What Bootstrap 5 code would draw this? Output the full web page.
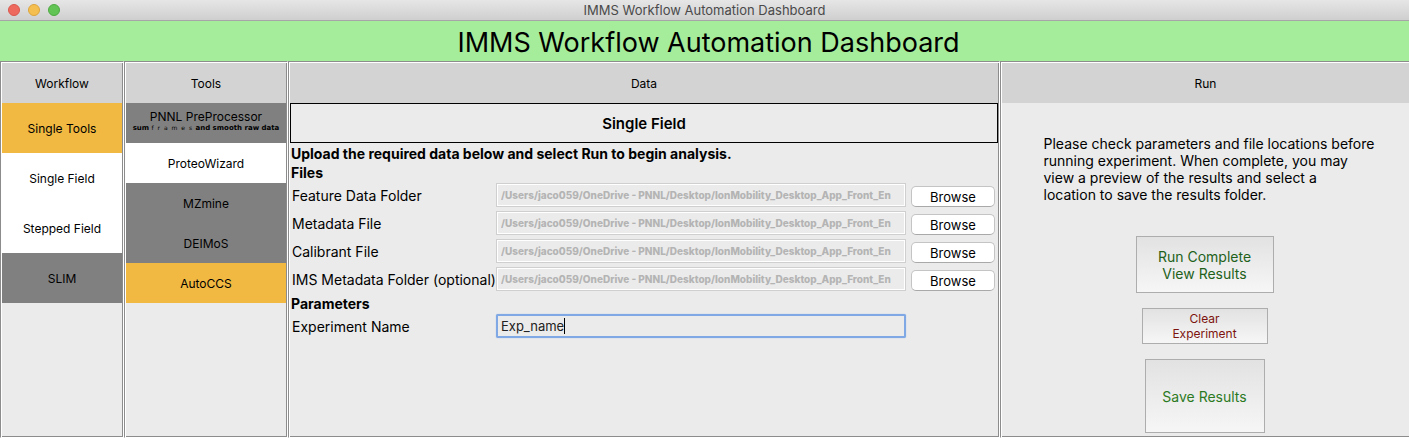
<!DOCTYPE html>
<html lang="en">
<head>
<meta charset="utf-8">
<meta name="viewport" content="width=device-width, initial-scale=1">
<title>IMMS Workflow Automation Dashboard</title>
<link href="https://cdn.jsdelivr.net/npm/bootstrap@5.3.0/dist/css/bootstrap.min.css" rel="stylesheet">
<style>
  body { font-family: Inter, "Liberation Sans", sans-serif; font-size: 12px; line-height: 16px; color: #000; background: #ebebeb; }
  .titlebar { height: 21px; border-bottom: 1px solid #a8a5a8; background: linear-gradient(#e6e6e6, #cfcfcf); color: #4a4a4a; display: grid; grid-template-columns: 1fr auto 1fr; font-size: 13px; }
  .light { width: 12px; height: 12px; border-radius: 50%; border: 1px solid; }
  .light-close { background: #ee6a5f; border-color: #d9584e; }
  .light-min { background: #f5bf4f; border-color: #dca43c; }
  .light-max { background: #61c454; border-color: #4eaa42; }
  .banner { background: #a6ed9b; height: 40px; padding-top: 2px; }
  .banner h1 { font-size: 27px; line-height: 40px; font-weight: 400; padding-left: 8px; }
  /* grooved frame: dark outer and light inner edge */
  .pane { border: 1px solid #fff; border-top-color: #8c8c8c; border-left-color: #8c8c8c; box-shadow: inset 1px 1px #fff, inset -1px -1px #8c8c8c; padding: 1px; }
  .pane-workflow { flex: 0 0 124px; }
  .pane-tools { flex: 0 0 164px; }
  .pane-data { flex: 708 1 0; min-width: 0; }
  .pane-run { flex: 407 1 0; min-width: 0; margin-right: -2px; }
  .pane-head { background: #d3d3d3; height: 40px; font-size: 12px; line-height: 16px; font-weight: 400; padding-top: 2px; }
  .step { border: 0; width: 100%; padding: 2px 0 0; height: 40px; background: #808080; color: #000; }
  .step-tall { height: 50px; }
  .step-on { background: #f1b941; }
  .step-open { background: #fff; }
  .step-noted { padding: 0 0 4px; line-height: 14px; }
  .note { font: bold 7px/8px "DejaVu Sans", sans-serif; white-space: pre; }
  .note span { font: 6px/8px "DejaVu Sans", sans-serif; letter-spacing: 1px; }
  .method { border: 1px solid #000; height: 40px; font-size: 15px; font-weight: 600; padding-top: 2px; }
  .section-line { font-size: 14px; line-height: 19px; font-weight: 700; padding-left: 1px; }
  .lead-line { padding-top: 1px; }
  .field { display: grid; grid-template-columns: 199px minmax(0, 1fr) 84px; column-gap: 5px; height: 28px; padding: 1px 3px 0 2px; font-size: 14px; }
  .field label { padding-top: 5px; white-space: nowrap; }
  .path { height: 24px; border: 1px solid #cfcfcf; box-shadow: inset 0 0 0 1px #fff; border-radius: 0; background: #ebebeb; padding: 0 4px; font-size: 10px; font-weight: 800; color: #b4b4b4; width: 100%; min-width: 0; }
  .browse { height: 21px; margin-top: 3px; border: 1px solid #c4c4c4; border-bottom-color: #a9a9a9; border-radius: 5px; background: #fff; font-size: 13px; line-height: 18px; padding: 0; color: #000; }
  .name-box { height: 24px; width: 100%; border: 2px solid #7fa8e4; border-radius: 2px; outline: 0; background: #ebebeb; padding: 0 3px; font-size: 13px; color: #222; box-shadow: 0 0 1px #7fa8e4; }
  .caret { left: 68px; top: 4px; width: 1px; height: 16px; background: #000; }
  .advice { font-size: 14px; line-height: 17px; width: 344px; padding: 32px 0 0 10px; }
  .act { border: 1px solid #adadad; background: linear-gradient(#e2e2e2, #f6f6f6); font-size: 14px; line-height: 17px; padding: 0; }
  .act-run { width: 138px; height: 57px; color: #22611a; }
  .act-clear { width: 126px; height: 36px; color: #7d130e; font-size: 12px; line-height: 15px; }
  .act-save { width: 120px; height: 74px; color: #2c7a1f; }
  .act-list { gap: 15px; padding: 33px 2px 0 0; }
</style>
</head>
<body class="d-flex flex-column min-vh-100">
<header>
  <div class="titlebar align-items-center">
    <div class="d-flex gap-2 ps-2"><span class="light light-close"></span><span class="light light-min"></span><span class="light light-max"></span></div>
    <div>IMMS Workflow Automation Dashboard</div>
  </div>
  <div class="banner text-center"><h1 class="m-0">IMMS Workflow Automation Dashboard</h1></div>
</header>
<main class="d-flex flex-grow-1 overflow-hidden">
  <nav class="pane pane-workflow" aria-label="Workflow">
    <h2 class="pane-head d-flex align-items-center justify-content-center m-0">Workflow</h2>
    <button type="button" class="step step-tall step-on d-block">Single Tools</button>
    <button type="button" class="step step-tall step-open d-block">Single Field</button>
    <button type="button" class="step step-tall step-open d-block">Stepped Field</button>
    <button type="button" class="step step-tall d-block">SLIM</button>
  </nav>
  <nav class="pane pane-tools" aria-label="Tools">
    <h2 class="pane-head d-flex align-items-center justify-content-center m-0">Tools</h2>
    <button type="button" class="step step-noted d-block">PNNL PreProcessor<div class="note">sum <span>f r a m e s</span> and smooth raw data</div></button>
    <button type="button" class="step step-open d-block">ProteoWizard</button>
    <button type="button" class="step d-block">MZmine</button>
    <button type="button" class="step d-block">DEIMoS</button>
    <button type="button" class="step step-on d-block">AutoCCS</button>
  </nav>
  <section class="pane pane-data">
    <h2 class="pane-head d-flex align-items-center justify-content-center m-0">Data</h2>
    <h3 class="method d-flex align-items-center justify-content-center m-0">Single Field</h3>
    <div class="section-line lead-line">Upload the required data below and select Run to begin analysis.</div>
    <div class="section-line">Files</div>
    <div class="field"><label for="feature">Feature Data Folder</label><input id="feature" class="path" disabled value="/Users/jaco059/OneDrive - PNNL/Desktop/IonMobility_Desktop_App_Front_En"><button type="button" class="browse">Browse</button></div>
    <div class="field"><label for="metadata">Metadata File</label><input id="metadata" class="path" disabled value="/Users/jaco059/OneDrive - PNNL/Desktop/IonMobility_Desktop_App_Front_En"><button type="button" class="browse">Browse</button></div>
    <div class="field"><label for="calibrant">Calibrant File</label><input id="calibrant" class="path" disabled value="/Users/jaco059/OneDrive - PNNL/Desktop/IonMobility_Desktop_App_Front_En"><button type="button" class="browse">Browse</button></div>
    <div class="field"><label for="ims">IMS Metadata Folder (optional)</label><input id="ims" class="path" disabled value="/Users/jaco059/OneDrive - PNNL/Desktop/IonMobility_Desktop_App_Front_En"><button type="button" class="browse">Browse</button></div>
    <div class="section-line">Parameters</div>
    <div class="field"><label for="expname">Experiment Name</label><div class="position-relative"><input id="expname" class="name-box" type="text" value="Exp_name"><span class="caret position-absolute"></span></div></div>
  </section>
  <section class="pane pane-run">
    <h2 class="pane-head d-flex align-items-center justify-content-center m-0">Run</h2>
    <div class="d-flex flex-column align-items-center">
      <p class="advice m-0">Please check parameters and file locations before running experiment. When complete, you may view a preview of the results and select a<br>location to save the results folder.</p>
      <div class="act-list d-flex flex-column align-items-center">
        <button type="button" class="act act-run">Run Complete<br>View Results</button>
        <button type="button" class="act act-clear">Clear<br>Experiment</button>
        <button type="button" class="act act-save">Save Results</button>
      </div>
    </div>
  </section>
</main>
<script src="https://cdn.jsdelivr.net/npm/bootstrap@5.3.0/dist/js/bootstrap.bundle.min.js"></script>
</body>
</html>
